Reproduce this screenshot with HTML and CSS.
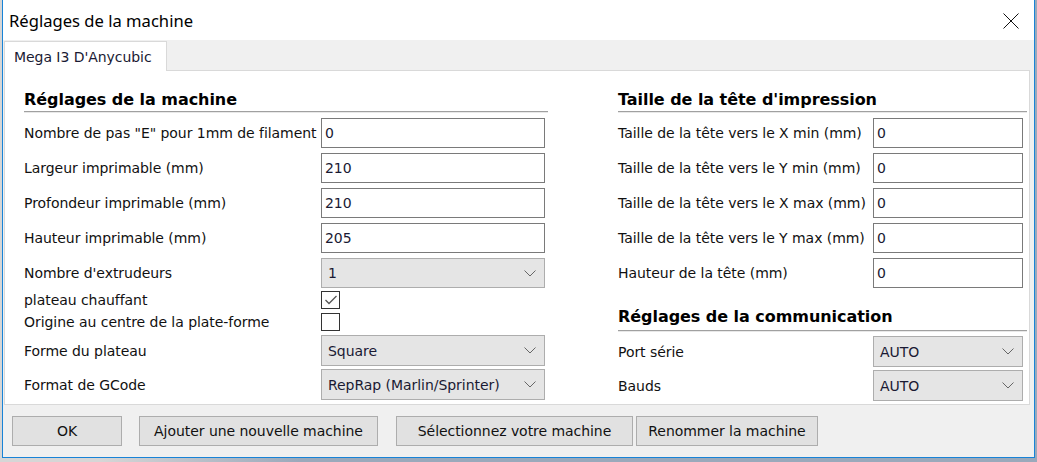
FILE: index.html
```html
<!DOCTYPE html>
<html lang="fr">
<head>
<meta charset="utf-8">
<title>Réglages de la machine</title>
<link rel="stylesheet" href="styles.css">
</head>
<body>
<div class="window">
  <div class="titlebar">
    <span class="title">Réglages de la machine</span>
    <svg class="close" width="16" height="16" viewBox="0 0 16 16"><path d="M0.5 0.5 L15.5 15.5 M15.5 0.5 L0.5 15.5" stroke="#111" stroke-width="1" fill="none"/></svg>
  </div>
  <div class="body">
    <div class="tabs"><div class="tab">Mega I3 D'Anycubic</div></div>
    <div class="panel">
      <div class="col col-left">
        <div class="section-title">Réglages de la machine</div>
        <div class="row"><span class="label">Nombre de pas "E" pour 1mm de filament</span><div class="field">0</div></div>
        <div class="row"><span class="label">Largeur imprimable (mm)</span><div class="field">210</div></div>
        <div class="row"><span class="label">Profondeur imprimable (mm)</span><div class="field">210</div></div>
        <div class="row"><span class="label">Hauteur imprimable (mm)</span><div class="field">205</div></div>
        <div class="row"><span class="label">Nombre d'extrudeurs</span><div class="combo"><span>1</span><svg class="chev" width="12" height="7" viewBox="0 0 12 7"><polyline points="0.5,0.5 6,6 11.5,0.5" fill="none" stroke="#666" stroke-width="1"/></svg></div></div>
        <div class="row row-check row-check-first"><span class="label">plateau chauffant</span><div class="check"><svg width="16" height="16" viewBox="0 0 16 16"><polyline points="2.5,8 6,11.5 13.5,4" fill="none" stroke="#555" stroke-width="1.3"/></svg></div></div>
        <div class="row row-check"><span class="label">Origine au centre de la plate-forme</span><div class="check"></div></div>
        <div class="row row-combo row-combo-first"><span class="label">Forme du plateau</span><div class="combo"><span>Square</span><svg class="chev" width="12" height="7" viewBox="0 0 12 7"><polyline points="0.5,0.5 6,6 11.5,0.5" fill="none" stroke="#666" stroke-width="1"/></svg></div></div>
        <div class="row row-combo"><span class="label">Format de GCode</span><div class="combo"><span>RepRap (Marlin/Sprinter)</span><svg class="chev" width="12" height="7" viewBox="0 0 12 7"><polyline points="0.5,0.5 6,6 11.5,0.5" fill="none" stroke="#666" stroke-width="1"/></svg></div></div>
      </div>
      <div class="col col-right">
        <div class="section-title">Taille de la tête d'impression</div>
        <div class="row"><span class="label">Taille de la tête vers le X min (mm)</span><div class="field">0</div></div>
        <div class="row"><span class="label">Taille de la tête vers le Y min (mm)</span><div class="field">0</div></div>
        <div class="row"><span class="label">Taille de la tête vers le X max (mm)</span><div class="field">0</div></div>
        <div class="row"><span class="label">Taille de la tête vers le Y max (mm)</span><div class="field">0</div></div>
        <div class="row"><span class="label">Hauteur de la tête (mm)</span><div class="field">0</div></div>
        <div class="section-title section-comm">Réglages de la communication</div>
        <div class="row row-combo row-combo-first"><span class="label">Port série</span><div class="combo"><span>AUTO</span><svg class="chev" width="12" height="7" viewBox="0 0 12 7"><polyline points="0.5,0.5 6,6 11.5,0.5" fill="none" stroke="#666" stroke-width="1"/></svg></div></div>
        <div class="row row-combo"><span class="label">Bauds</span><div class="combo"><span>AUTO</span><svg class="chev" width="12" height="7" viewBox="0 0 12 7"><polyline points="0.5,0.5 6,6 11.5,0.5" fill="none" stroke="#666" stroke-width="1"/></svg></div></div>
      </div>
    </div>
    <div class="buttons">
      <div class="btn btn-ok">OK</div>
      <div class="btn btn-add">Ajouter une nouvelle machine</div>
      <div class="btn btn-select">Sélectionnez votre machine</div>
      <div class="btn btn-rename">Renommer la machine</div>
    </div>
  </div>
</div>
</body>
</html>
```

FILE: styles.css
```css
* { box-sizing: border-box; }
html, body { margin: 0; padding: 0; }
body {
  width: 1037px;
  height: 462px;
  overflow: hidden;
  background: linear-gradient(to right, #d6d6d6 0, #d6d6d6 100px, #9aa9bb 300px, #9aa9bb 100%);
  font-family: "DejaVu Sans", sans-serif;
  font-size: 14px;
  letter-spacing: -0.05px;
  color: #111;
}
.window {
  margin-left: 2px;
  width: 1033px;
  height: 458px;
  border: 1px solid #1883d7;
  border-top: none;
  background: #f0f0f0;
  display: flex;
  flex-direction: column;
}
.titlebar {
  height: 40px;
  flex: none;
  background: #fff;
  display: flex;
  align-items: center;
  justify-content: space-between;
  padding-left: 6px;
  padding-right: 15px;
}
.title {
  font-family: "Noto Sans", "Open Sans", sans-serif;
  font-size: 16.6px;
  letter-spacing: 0;
  color: #000;
}
.close { display: block; margin-top: 1px; }
.body {
  flex: 1;
  display: flex;
  flex-direction: column;
  padding-left: 1px;
  padding-right: 4px;
}
.tabs {
  margin-top: 1px;
  display: flex;
  position: relative;
  z-index: 1;
}
.tab {
  width: 163px;
  height: 30px;
  margin-bottom: -1px;
  background: #fff;
  border: 1px solid #d9d9d9;
  border-bottom: none;
  padding-left: 9px;
  display: flex;
  align-items: center;
  color: #1a1a33;
}
.panel {
  height: 335px;
  background: #fff;
  border: 1px solid #d9d9d9;
  display: flex;
  padding: 19px 2px 0 19px;
}
.col-left { width: 524px; }
.col-right { width: 409px; margin-left: 70px; }
.section-title {
  font-weight: bold;
  font-size: 16px;
  line-height: 20px;
  height: 22px;
  padding-bottom: 1px;
  border-bottom: 1px solid #a0a0a0;
  box-shadow: 0 1px 0 #e8e8e8;
  color: #000;
  margin-bottom: 6px;
}
.section-comm {
  margin-top: 19px;
  height: 24px;
  padding-bottom: 3px;
  margin-bottom: 5px;
}
.row {
  display: flex;
  align-items: center;
  height: 30px;
  margin-bottom: 5px;
}
.row .label { flex: none; white-space: nowrap; }
.col-left .label { width: 297px; }
.col-right .label { width: 255px; }
.field {
  height: 30px;
  border: 1px solid #7a7a7a;
  background: #fff;
  padding-left: 3px;
  display: flex;
  align-items: center;
  color: #1a1a33;
}
.col-left .field, .col-left .combo { width: 224px; }
.col-right .field, .col-right .combo { width: 150px; }
.combo {
  height: 30px;
  border: 1px solid #adadad;
  background: #e5e5e5;
  padding-left: 6px;
  padding-right: 8px;
  display: flex;
  align-items: center;
  justify-content: space-between;
  color: #1a1a33;
}
.chev { display: block; }
.row-check {
  height: 18px;
  margin-bottom: 4px;
}
.row-check-first { margin-top: -2px; }
.check {
  width: 19px;
  height: 18px;
  border: 1px solid #333;
  background: #fff;
  display: flex;
  align-items: center;
  justify-content: center;
}
.check svg { display: block; }
.row-combo {
  height: 31px;
  margin-bottom: 3px;
}
.row-combo .combo { height: 31px; }
.row-combo-first { margin-top: 1px; }
.buttons {
  display: flex;
  margin-top: 11px;
  padding-left: 8px;
}
.btn {
  height: 30px;
  background: #e1e1e1;
  border: 1px solid #adadad;
  display: flex;
  align-items: center;
  justify-content: center;
  color: #111;
}
.btn-ok { width: 110px; }
.btn-add { width: 239px; margin-left: 17px; }
.btn-select { width: 237px; margin-left: 18px; }
.btn-rename { width: 182px; margin-left: 3px; }
```
